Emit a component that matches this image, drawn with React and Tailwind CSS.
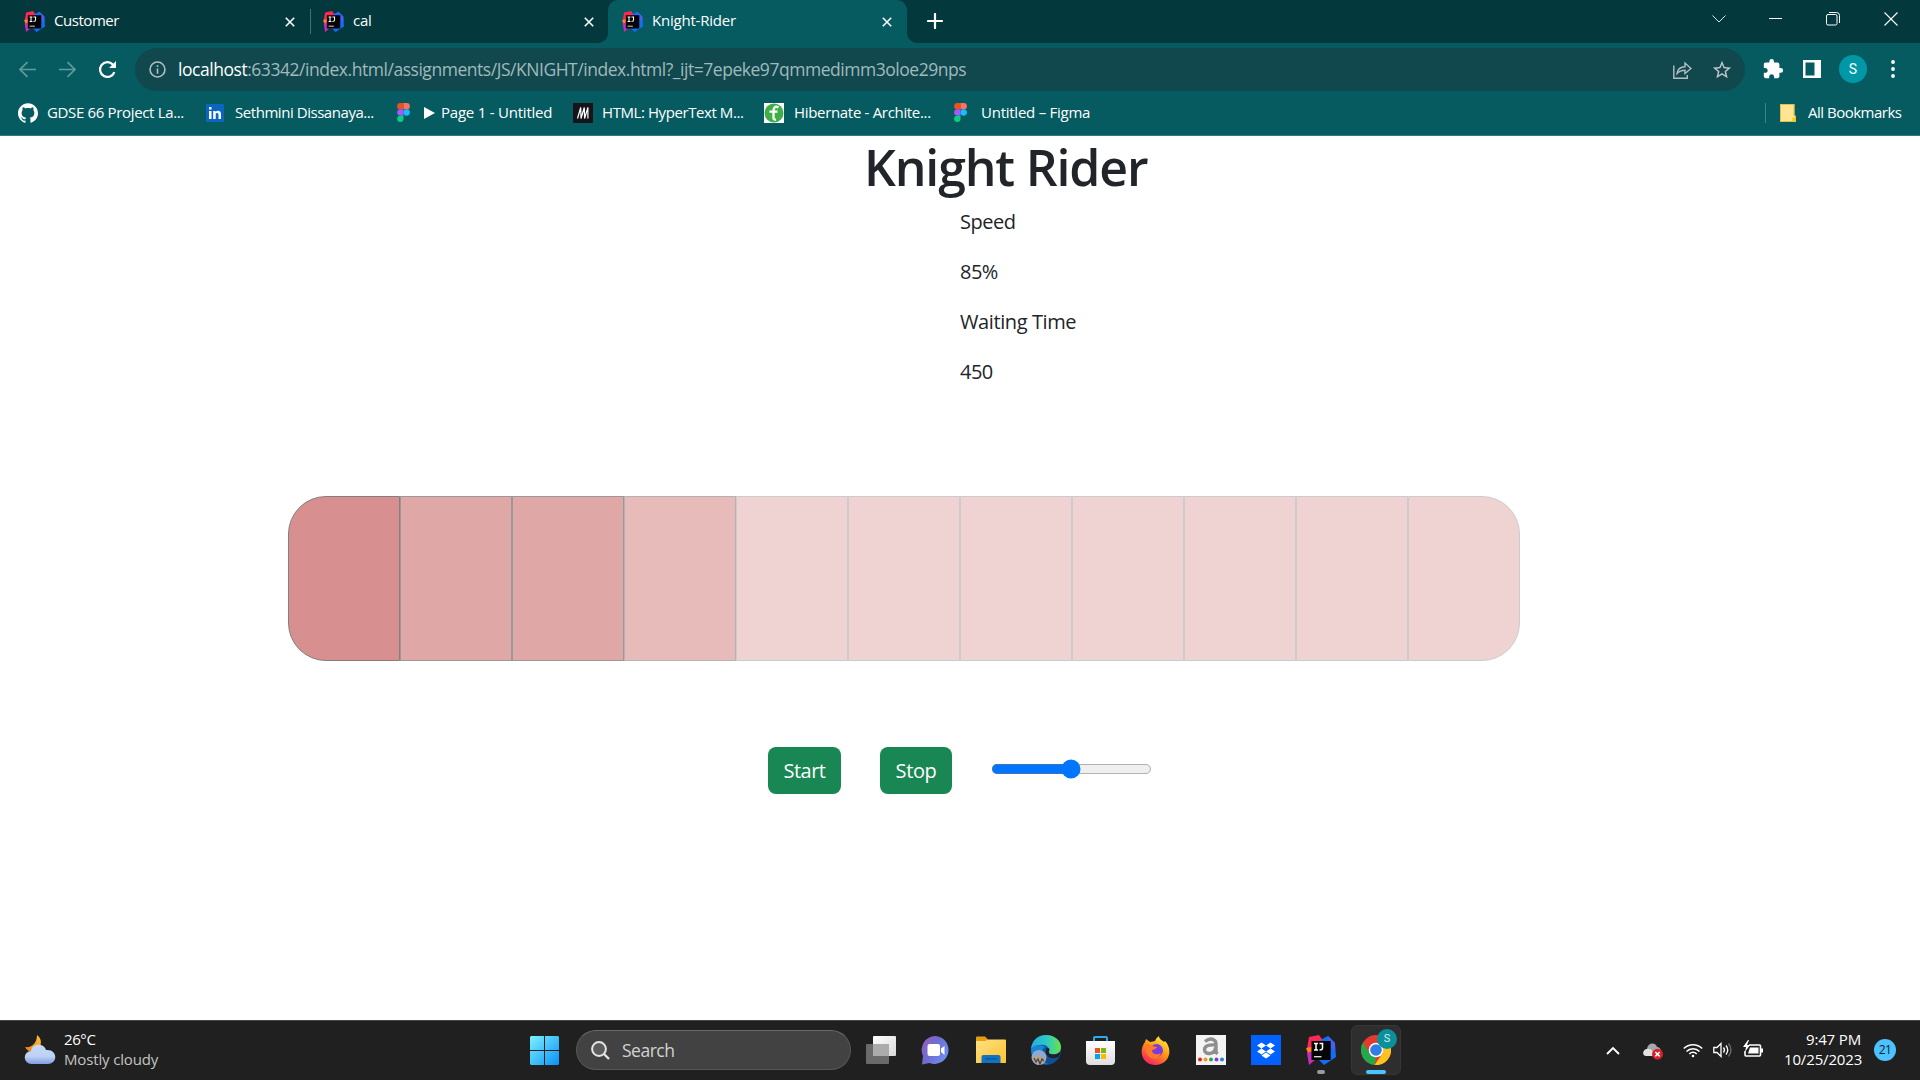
import React from 'react';
import { SiGithub } from 'react-icons/si';
import { MdOutlineStarBorder, MdExtension } from 'react-icons/md';

function IntelliJ({ className }) {
  return (
    <svg viewBox="0 0 30 30" className={className}>
      <path d="M3 2 13 0 18 7 10 18 1 14Z" fill="#fe2857" />
      <path d="M0 13 10 11 14 20 3 21Z" fill="#fc801d" />
      <path d="M1 18 12 14 16 25 9 25 3 30 2 24Z" fill="#c32fb8" />
      <path d="M16 4 22 1 29 8 30 22 18 30 12 24Z" fill="#146ef5" />
      <path d="M22 1 29 8 29 15 24 12Z" fill="#4a5ff0" />
      <rect x="5.500" y="6" width="19.200" height="19" fill="#050505" />
      <path d="M8 8.500h4M10 8.500v6.500M8 15h4M13.500 8.500h3.800M16.500 8.500v4.500q0 2-3 2" stroke="#fff" strokeWidth="1.500" fill="none" />
      <path d="M8 21.700h7.500" stroke="#e6e6e6" strokeWidth="1.300" />
    </svg>
  );
}

function Figma() {
  return (
    <svg viewBox="0 0 12 18" className="h-[19px] w-[13px] shrink-0">
      <path d="M3 0h3v6H3a3 3 0 0 1 0-6Z" fill="#f24e1e" />
      <path d="M6 0h3a3 3 0 0 1 0 6H6Z" fill="#ff7262" />
      <path d="M3 6h3v6H3a3 3 0 0 1 0-6Z" fill="#a259ff" />
      <circle cx="9" cy="9" r="3" fill="#1abcfe" />
      <path d="M3 12h3v3a3 3 0 1 1-3-3Z" fill="#0acf83" />
    </svg>
  );
}

function Close({ className }) {
  return (
    <svg viewBox="0 0 10 10" className={className}>
      <path d="M.8.8 9.200 9.200M9.200.8.8 9.200" stroke="#fff" strokeWidth="1.600" />
    </svg>
  );
}

function Tab({ title, textClass, className }) {
  return (
    <div className={`flex h-[43px] items-center ${className}`}>
      <IntelliJ className="h-[21px] w-[21px] shrink-0" />
      <span className={`ml-[9px] grow whitespace-nowrap pb-[2px] text-[15px] ${textClass}`}>{title}</span>
      <Close className="h-[10px] w-[10px]" />
    </div>
  );
}

function TabStrip() {
  return (
    <div className="flex h-[43px] bg-[#03383d]">
      <Tab title="Customer" textClass="tracking-[-0.45px]" className="w-[310px] pl-[24px] pr-[15px]" />
      <div className="mt-[9px] h-[25px] w-px bg-[#3a7479]" />
      <Tab title="cal" textClass="tracking-[-0.2px]" className="w-[297px] pl-[12px] pr-[14px]" />
      <div className="relative">
        <Tab title="Knight-Rider" textClass="tracking-[-0.22px]" className="w-[299px] rounded-t-[10px] bg-[#055b60] pl-[14px] pr-[15px]" />
        <svg viewBox="0 0 10 10" className="absolute bottom-0 left-[-10px] h-[10px] w-[10px]"><path d="M10 0v10H0A10 10 0 0 0 10 0" fill="#055b60" /></svg>
        <svg viewBox="0 0 10 10" className="absolute bottom-0 right-[-10px] h-[10px] w-[10px]"><path d="M0 0v10h10A10 10 0 0 1 0 0" fill="#055b60" /></svg>
      </div>
      <svg viewBox="0 0 16 16" className="ml-[20px] mt-[13px] h-[16px] w-[16px]"><path d="M8 1v14M1 8h14" stroke="#fff" strokeWidth="2.200" strokeLinecap="round" /></svg>
      <div className="ml-auto flex h-[37px] items-center pr-[22px]">
        <svg viewBox="0 0 14 8" className="mr-[43px] h-[8px] w-[14px]"><path d="M.5.5 7 7 13.500.5" fill="none" stroke="#dce6e7" /></svg>
        <div className="mr-[44px] h-px w-[13px] bg-white" />
        <svg viewBox="0 0 14 14" className="mr-[44px] h-[14px] w-[14px]" fill="none" stroke="#fff"><rect x=".5" y="2.500" width="10.500" height="10.500" rx="1.500" /><path d="M3 .5h7.500a3 3 0 0 1 3 3V11" /></svg>
        <svg viewBox="0 0 14 14" className="h-[14px] w-[14px]"><path d="M.5.5l13 13M13.500.5l-13 13" stroke="#fff" strokeWidth="1.100" /></svg>
      </div>
    </div>
  );
}

function Toolbar() {
  return (
    <div className="flex h-[53px] items-center">
      <svg viewBox="0 0 16 16" className="mb-px ml-[19px] h-[17px] w-[17px]" fill="none" stroke="#5f9a9d" strokeWidth="1.600"><path d="M16 8H1.500M8 1 1 8l7 7" /></svg>
      <svg viewBox="0 0 16 16" className="mb-px ml-[23px] h-[17px] w-[17px]" fill="none" stroke="#5f9a9d" strokeWidth="1.600"><path d="M0 8h14.500M8 1l7 7-7 7" /></svg>
      <svg viewBox="0 0 18 18" className="mb-px ml-[22px] h-[19px] w-[19px]" fill="none" stroke="#fff" strokeWidth="2.100"><path d="M15.500 11.500A7 7 0 1 1 14 4.200l1.500 1.600" /><path d="M17 1v6.500h-6.500Z" fill="#fff" stroke="none" /></svg>
      <div className="ml-[18px] flex h-[43px] w-[1610px] items-center rounded-full bg-[#10484e] pl-[14px] pr-[12px]">
        <svg viewBox="0 0 16 16" className="h-[17px] w-[17px]" fill="none" stroke="#b3bfc3" strokeWidth="1.500"><circle cx="8" cy="8" r="7" /><path d="M8 7v5M8 4v1.600" /></svg>
        <span className="ml-[12px] grow whitespace-nowrap text-[17.5px] tracking-[-0.46px] text-[#a0babc]"><span className="text-white">localhost</span>:63342/index.html/assignments/JS/KNIGHT/index.html?_ijt=7epeke97qmmedimm3oloe29nps</span>
        <svg viewBox="0 0 19 18" className="mr-[19px] h-[18px] w-[19px]" fill="none" stroke="#b4bdc2" strokeWidth="1.400"><path d="M.8 4.500v12.700h13.500V14" /><path d="M4 12.500c.5-4 3.500-6.500 8-6.700V2l6 5.500-6 5V9.200c-4 0-6 1-8 3.300Z" /></svg>
        <MdOutlineStarBorder className="h-[22px] w-[22px] text-[#c0c5cb]" />
      </div>
      <MdExtension className="mb-[2px] ml-[17px] h-[22px] w-[22px] text-white" />
      <svg viewBox="0 0 18 18" className="mb-px ml-[19px] h-[18px] w-[18px]"><path d="M0 0h18v18H0ZM2.500 2.500v13h9v-13Z" fill="#fff" fillRule="evenodd" /></svg>
      <div className="mb-px ml-[18px] flex h-[28px] w-[28px] items-center justify-center rounded-full bg-[#0097a7] font-[Roboto] text-[14px] text-white">S</div>
      <svg viewBox="0 0 4 18" className="mb-px ml-[23.500px] h-[18px] w-[4px]" fill="#fff"><circle cx="2" cy="2" r="1.900" /><circle cx="2" cy="9" r="1.900" /><circle cx="2" cy="16" r="1.900" /></svg>
    </div>
  );
}

function Bookmark({ icon, label, className, textClass }) {
  return (
    <div className={`flex shrink-0 items-center ${className}`}>
      {icon}
      <span className={`whitespace-nowrap text-[15px] text-white ${textClass}`}>{label}</span>
    </div>
  );
}

function Bookmarks() {
  return (
    <div className="flex h-[40px] items-center border-b border-[#35797f] pb-[6px] pl-[18px]">
      <Bookmark className="w-[188px]" textClass="ml-[9px] tracking-[-0.34px]" label="GDSE 66 Project La..." icon={<SiGithub className="h-[20px] w-[20px] text-white" />} />
      <Bookmark className="w-[191px]" textClass="ml-[11px] tracking-[-0.45px]" label="Sethmini Dissanaya..." icon={
        <svg viewBox="0 0 18 18" className="h-[18px] w-[18px]"><rect width="18" height="18" rx="1" fill="#0a66c2" /><path d="M3 7h2.500v8H3ZM3 3h2.500v2.500H3ZM7.200 7h2.400v1.200C11 6 15 6.300 15 10v5h-2.500v-4.500c0-2-2.800-2-2.800 0V15H7.200Z" fill="#fff" /></svg>} />
      <Bookmark className="w-[176px]" textClass="ml-[14px] tracking-[-0.22px]" icon={<Figma />} label={<span className="flex items-center"><svg viewBox="0 0 11 12" className="mr-[6px] h-[12px] w-[11px]"><path d="M0 0v12l11-6Z" fill="#fff" /></svg>Page 1 - Untitled</span>} />
      <Bookmark className="w-[191px]" textClass="ml-[9px] tracking-[-0.42px]" label="HTML: HyperText M..." icon={
        <svg viewBox="0 0 20 20" className="h-[20px] w-[20px]"><path d="M0 0h20v20H0Z" fill="#15141a" /><path d="M4.500 15.500 7.700 4.500l.3 11 3.300-11 .3 11 3.300-11v11" fill="none" stroke="#fff" strokeWidth="1.200" /></svg>} />
      <Bookmark className="w-[190px]" textClass="ml-[10px] tracking-[-0.32px]" label="Hibernate - Archite..." icon={
        <svg viewBox="0 0 20 20" className="h-[20px] w-[20px]"><path d="M0 0h20v20H0Z" fill="#fff" /><circle cx="10" cy="10" r="9.500" fill="#3fae49" /><path d="M14.500 4.500C11 2.500 9.500 5 9.500 8v7q0 2 2.500 1.500M5.500 8.700h8" fill="none" stroke="#fff" strokeWidth="2.300" /></svg>} />
      <Bookmark textClass="ml-[14px] tracking-[-0.25px]" icon={<Figma />} label="Untitled – Figma" />
      <div className="ml-auto mr-[14px] h-[20px] w-px bg-[#3b8387]" />
      <Bookmark className="w-[140px]" textClass="ml-[12px] tracking-[-0.5px]" label="All Bookmarks" icon={
        <svg viewBox="0 0 16 18" className="h-[18px] w-[16px]"><path d="M0 0h14.500v12H16v6H0Z" fill="#ffe591" /><path d="M.4.4H14v11.200h1.600V17.600H.4Z" fill="none" stroke="#d8b22c" strokeWidth=".8" /><path d="M12.500 13.500h3V18h-3.500Z" fill="#f5ca28" /></svg>} />
    </div>
  );
}

const cells = [
  'w-[112px] rounded-l-[38px] border-[#808080] bg-[#d88f8f]',
  'w-[112px] border-[#999999] bg-[#dfa7a5]',
  'w-[112px] border-[#999999] bg-[#dfa7a5]',
  'w-[112px] border-[#b3b3b3] bg-[#e8bbbb]',
  'w-[112px] border-[#cccccc] bg-[#efd3d3]',
  'w-[112px] border-[#cccccc] bg-[#efd3d3]',
  'w-[112px] border-[#cccccc] bg-[#efd3d3]',
  'w-[112px] border-[#cccccc] bg-[#efd3d3]',
  'w-[112px] border-[#cccccc] bg-[#efd3d3]',
  'w-[112px] border-[#cccccc] bg-[#efd3d3]',
  'w-[112px] rounded-r-[38px] border-[#cccccc] bg-[#efd3d3]',
];

function KnightRider() {
  return (
    <main className="h-[884px] bg-white pt-px text-[#212529]">
      <h1 className="ml-[864px] whitespace-nowrap text-[50px] font-semibold leading-[60px] tracking-[-1.150px]">Knight Rider</h1>
      <div className="ml-[960px] mt-[10px] flex flex-col gap-[20px] text-[20px] leading-[30px] tracking-[-0.5px]">
        <p>Speed</p>
        <p>85%</p>
        <p className="tracking-[-0.4px]">Waiting Time</p>
        <p>450</p>
      </div>
      <div className="ml-[288px] mt-[109px] flex">
        {cells.map((c, i) => <div key={i} className={`h-[165px] border ${c}`} />)}
      </div>
      <div className="ml-[768px] mt-[86px] flex items-center">
        <button className="h-[47px] w-[73px] rounded-[8px] bg-[#198754] text-[20px] tracking-[-0.5px] text-white">Start</button>
        <button className="ml-[39px] h-[47px] w-[72px] rounded-[8px] bg-[#198754] text-[20px] tracking-[-0.4px] text-white">Stop</button>
        <input type="range" defaultValue="50" className="mb-[2px] ml-[31px] w-[129px] [zoom:1.25]" />
      </div>
    </main>
  );
}

function Weather() {
  return (
    <div className="flex w-[504px] items-center pl-[24px]">
      <svg viewBox="0 0 32 30" className="h-[30px] w-[32px]">
        <defs>
          <linearGradient id="cloud" x2="0" y2="1"><stop stopColor="#c5dbfa" /><stop offset=".6" stopColor="#bed1f5" /><stop offset="1" stopColor="#7e9fe0" /></linearGradient>
          <linearGradient id="moon" x1="1" x2="0" y2="1"><stop stopColor="#fcc53a" /><stop offset="1" stopColor="#ef7c12" /></linearGradient>
        </defs>
        <path d="M13 0c6 4 5 13-2 16-4 1.500-8 0-10-4 7 1 12-4 12-12Z" fill="url(#moon)" />
        <path d="M7.500 29A6.500 6.500 0 0 1 7 16C8 8 20 8 22 15c12-1 12 14 2 14Z" fill="url(#cloud)" />
      </svg>
      <div className="mb-[2px] ml-[8px] text-[15px] leading-[20px]">
        <div className="tracking-[-0.4px] text-white">26°C</div>
        <div className="whitespace-nowrap tracking-[-0.15px] text-[#c4c4c4]">Mostly cloudy</div>
      </div>
    </div>
  );
}

function Apps() {
  return (
    <div className="flex items-center">
      <svg viewBox="0 0 29 29" className="ml-[26px] h-[29px] w-[29px]">
        <defs><linearGradient id="win" gradientUnits="userSpaceOnUse" x2="29" y2="29"><stop stopColor="#7df1ff" /><stop offset="1" stopColor="#0a91f5" /></linearGradient></defs>
        <path d="M1 0h13v14H0V1ZM15 0h13l1 1v13H15ZM0 15h14v14H1l-1-1ZM15 15h14v13l-1 1H15Z" fill="url(#win)" />
      </svg>
      <div className="ml-[17px] flex h-[40px] w-[275px] items-center rounded-full border border-[#575757] border-t-[#6a6a6a] bg-[#424242] pl-[14px]">
        <svg viewBox="0 0 19 19" className="h-[19px] w-[19px]" fill="#5c5c5c" stroke="#e4e4e4" strokeWidth="2"><circle cx="8" cy="8" r="6.900" /><path d="m13 13 5 5" strokeWidth="2.400" /></svg>
        <span className="ml-[12px] text-[17.5px] tracking-[-0.5px] text-[#d2d2d2]">Search</span>
      </div>
      <svg viewBox="0 0 30 28" className="ml-[15px] h-[28px] w-[30px]"><defs><linearGradient id="tv" x2="1" y2="1"><stop stopColor="#fff" /><stop offset="1" stopColor="#d8d8d8" /></linearGradient></defs><rect y="8" width="23" height="20" rx="1" fill="#6a6a6a" /><rect x="7" width="23" height="20" rx="1" fill="url(#tv)" /><path d="M7 8h16v12H7Z" fill="#ababab" /></svg>
      <svg viewBox="0 0 30 29" className="ml-[25px] h-[29px] w-[30px]"><defs><linearGradient id="chat" x1="0" x2="1" y2=".6"><stop stopColor="#9a5cb8" /><stop offset=".5" stopColor="#706cd0" /><stop offset="1" stopColor="#6d8df0" /></linearGradient></defs><path d="M15 0a14 14 0 1 1-6.500 27L1 28.500 2 20A14 14 0 0 1 15 0Z" fill="url(#chat)" /><rect x="6.500" y="8" width="12.500" height="12" rx="2" fill="#fff" /><path d="M20 12.500 23.500 10v9L20 16Z" fill="#fff" /></svg>
      <svg viewBox="0 0 30 28" className="ml-[25px] h-[28px] w-[30px]"><defs><linearGradient id="fold" x2="1" y2="1"><stop stopColor="#ffe082" /><stop offset="1" stopColor="#fcc32f" /></linearGradient></defs><path d="M0 1.500Q0 .5 1 .5h8l3 3v6H0Z" fill="#e4a00c" /><path d="M0 5h9l3-1.500h17q1 0 1 1V27H0Z" fill="url(#fold)" /><path d="M5.500 27v-6q0-2 2-2h15q2 0 2 2v6Z" fill="#1272c3" /><path d="M9 22.800h12" stroke="#074d88" /></svg>
      <svg viewBox="0 0 30 30" className="ml-[25px] h-[30px] w-[30px]">
        <defs><linearGradient id="edge" x2="1"><stop stopColor="#29a9e0" /><stop offset=".5" stopColor="#2ac7c8" /><stop offset="1" stopColor="#6ce247" /></linearGradient></defs>
        <circle cx="15" cy="15" r="15" fill="#0d58a7" />
        <path d="M0 14C1 5 7 0 15 0c9 0 15 6 15 12 0 5-4 8-9 7-4 0-4-2-3-4 0-4-5-6-9-5-4 0-7 2-9 4Z" fill="url(#edge)" />
        <path d="M0 14c3-4 10-5 14-2-5 3-4 12 4 16C8 32 0 24 0 14Z" fill="#1687d2" />
        <path d="M15 14c1-2 4-1 3.500 1-1.500 3 0 4 3 4.500 3 .5 6-1 8.500-3l-2 5c-6 4-15 1-13-7.500Z" fill="#202020" />
        <path d="M14 17c1 6 8 8 14 5-3 5-9 9-15 5-2-3-1-7 1-10Z" fill="#0f4f96" />
        <circle cx="8" cy="22.500" r="7.500" fill="#8fa9cf" /><path d="M1 22c5-3 9 0 14 1-1 9-12 9-14-1Z" fill="#b8a58e" /><path d="m3 23 2 4 2-3 2 5 2-5 2 2" stroke="#4b444a" strokeWidth="1.300" fill="none" />
      </svg>
      <svg viewBox="0 0 30 29" className="ml-[25px] h-[29px] w-[30px]"><defs><linearGradient id="store" x2="0" y2="1"><stop stopColor="#fff" /><stop offset="1" stopColor="#dedede" /></linearGradient></defs><path d="M8 6V2q0-1 1-1h11q1 0 1 1v4" fill="none" stroke="#31a9e8" strokeWidth="2" /><path d="M0 5h29v20q0 4-4 4H4q-4 0-4-4Z" fill="url(#store)" /><path d="M9 12h5v5H9Z" fill="#f25022" /><path d="M15 12h5v5h-5Z" fill="#7fba00" /><path d="M9 18h5v5H9Z" fill="#00a4ef" /><path d="M15 18h5v5h-5Z" fill="#ffb900" /></svg>
      <svg viewBox="0 0 30 29" className="ml-[25px] h-[29px] w-[30px]">
        <defs><linearGradient id="fox" x1=".8" x2=".2" y2="1"><stop stopColor="#fff04a" /><stop offset=".45" stopColor="#ff980e" /><stop offset="1" stopColor="#f5156c" /></linearGradient></defs>
        <path d="M4 6 5 3l4 3 5-1c1-3 3-4 4-5 0 3 3 4 5 6l1-1c8 8 5 23-9 24C1 29-3 15 4 6Z" fill="url(#fox)" />
        <circle cx="15.500" cy="14.500" r="6.500" fill="#7a3be0" /><path d="M3 9c3-2 6-1 8 1l5 1c-1 3-5 2-5 4 1 4 6 4 9 2-2 7-11 7-14 1Z" fill="#ff7a2b" />
      </svg>
      <svg viewBox="0 0 30 30" className="ml-[25px] h-[30px] w-[30px]"><path d="M0 0h30v30H0Z" fill="#f4f4f4" /><path d="M9 6.500q5-4 9-1.500 2 1 2 4v7q0 1.500 1.500 3M19.500 10C12 9.500 8.500 11 8.500 15c0 5 10 5 11-2" fill="none" stroke="#8f8f8f" strokeWidth="3.400" /><circle cx="4" cy="24.500" r="2" fill="#ed1c24" /><circle cx="9.500" cy="24.500" r="2" fill="#f7941d" /><circle cx="15" cy="24.500" r="2" fill="#22a94f" /><circle cx="20.500" cy="24.500" r="2" fill="#8a3bd0" /><circle cx="26" cy="24.500" r="2" fill="#1c88e0" /></svg>
      <svg viewBox="0 0 30 30" className="ml-[25px] h-[30px] w-[30px]"><path d="M0 0h30v30H0Z" fill="#0061fe" /><path d="m10.500 7.500 4.500 3-4.500 3-4.500-3ZM19.500 7.500l4.500 3-4.500 3-4.500-3ZM10.500 13.500l4.500 3-4.500 3-4.500-3ZM19.500 13.500l4.500 3-4.500 3-4.500-3ZM15 17.500l4.500 3-4.500 3-4.500-3Z" fill="#fff" /></svg>
      <div className="relative ml-[25px]"><IntelliJ className="h-[30px] w-[30px]" /><div className="absolute left-[11px] top-[35px] h-[4px] w-[8px] rounded-full bg-[#9a9a9a]" /></div>
      <div className="relative ml-[15px] flex h-[50px] w-[50px] items-center justify-center rounded-[6px] border border-[#363636] bg-[#2e2e2e]">
        <svg viewBox="0 0 30 30" className="h-[30px] w-[30px]"><circle cx="15" cy="15" r="15" fill="#e33b2e" /><path d="M2 7.500 8.500 18.700 15 22.500 13.500 30A15 15 0 0 1 2 7.500Z" fill="#22a94c" /><path d="M15 8h13.300A15 15 0 0 1 13.500 30L21.500 18.500Z" fill="#fcc31e" /><circle cx="15" cy="15" r="7.300" fill="#fff" /><circle cx="15" cy="15" r="5.800" fill="#2e7de9" /></svg>
        <div className="absolute left-[25px] top-[3px] flex h-[20px] w-[20px] items-center justify-center rounded-full bg-[#0b8f9b] font-[Roboto] text-[11px] text-[#d7eef0]">S</div>
        <div className="absolute bottom-0 left-[14px] h-[4px] w-[20px] rounded-full bg-[#4cc2ff]" />
      </div>
    </div>
  );
}

function Tray() {
  return (
    <div className="ml-auto flex items-center pr-[24px] text-white">
      <svg viewBox="0 0 14 9" className="mr-[23px] h-[9px] w-[14px]"><path d="m1 8 6-6 6 6" fill="none" stroke="#fff" strokeWidth="1.900" /></svg>
      <svg viewBox="0 0 20 17" className="mr-[20px] mt-[3px] h-[17px] w-[20px]"><path d="M4 13C-1 13-1 7 4 6c1-7 9-7 10-2 5 0 6 9 0 9Z" fill="#a7a7a7" /><path d="M4 13C-1 13-1 7 4 6c4-1 6 2 9 7Z" fill="#e2e2e2" /><circle cx="14.500" cy="11.200" r="5.500" fill="#d81f2a" /><path d="m12.300 9 4.400 4.400m0-4.400-4.400 4.400" stroke="#fff" strokeWidth="1.500" /></svg>
      <svg viewBox="0 0 20 15" className="mr-[10px] h-[15px] w-[20px]" fill="none" stroke="#fff" strokeWidth="1.500"><path d="M.8 5.500a13 13 0 0 1 18.400 0M3.500 8.500a9 9 0 0 1 13 0M6.300 11a5 5 0 0 1 7.400 0" /><circle cx="10" cy="13" r="1.300" fill="#fff" stroke="none" /></svg>
      <svg viewBox="0 0 20 16" className="mr-[10px] h-[16px] w-[20px]" fill="none" stroke="#fff" strokeWidth="1.300"><path d="M.8 5.500H4l4-4v13l-4-4H.8Z" /><path d="M10.500 5.500q2 2.500 0 5" /><path d="M13 3.500q3.500 4.500 0 9" /><path d="M15.500 1.500q5 6.500 0 13" stroke="#6b6b6b" /></svg>
      <svg viewBox="0 0 20 18" className="mb-[2px] mr-[21px] h-[18px] w-[20px]"><path d="M6 5h10.500q1 0 1 1v9q0 1-1 1H3q-1 0-1-1v-4" fill="none" stroke="#fff" strokeWidth="1.600" /><path d="M7 7.500h8.500v6H5Z" fill="#fff" /><path d="M18 8.500h2v4h-2Z" fill="#fff" /><path d="M5 0 0 7h3l-1 5 5-7H4l2-5Z" fill="#fff" /></svg>
      <div className="mb-[2px] w-[77px] whitespace-nowrap text-right text-[15px] leading-[20px] tracking-[-0.15px]">
        <div>9:47 PM</div>
        <div>10/25/2023</div>
      </div>
      <div className="ml-[13px] flex h-[22px] w-[22px] items-center justify-center rounded-full bg-[#4cc2ff] pb-px text-[12px] tracking-[-0.6px] text-[#10212b]">21</div>
    </div>
  );
}

export default function App() {
  return (
    <div className="flex h-[1080px] w-[1920px] flex-col overflow-hidden bg-[#055b60] font-['Open_Sans','Noto_Sans',sans-serif] text-white">
      <TabStrip />
      <Toolbar />
      <Bookmarks />
      <KnightRider />
      <footer className="flex h-[60px] border-t border-[#454545] bg-[#202020] pb-px">
        <Weather />
        <Apps />
        <Tray />
      </footer>
    </div>
  );
}
